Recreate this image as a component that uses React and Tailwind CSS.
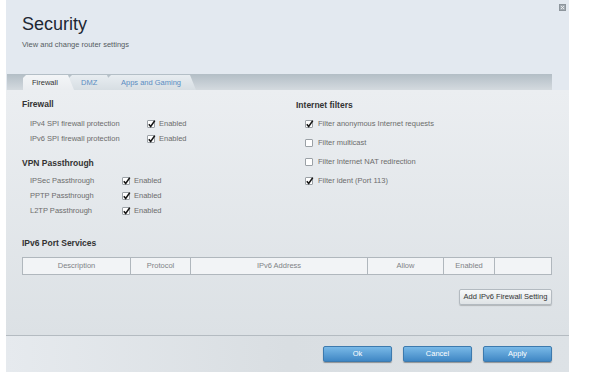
import React from "react";

const Check = ({ checked }) => (
  <span className="relative w-[8px] h-[8px] border border-[#9ba1a6] bg-white shrink-0 rounded-[1px]">
    {checked && (
      <svg width="9" height="9" viewBox="0 0 9 9" className="absolute left-[-1px] top-[-2px] overflow-visible">
        <path d="M1.8 5.2 L3.7 7.4 L7.8 1.6" fill="none" stroke="#151515" strokeWidth="1.6" />
      </svg>
    )}
  </span>
);

const Row = ({ label, w }) => (
  <div className="flex items-center h-[15px] pl-[8px]">
    <span className="text-[#6c6c6c]" style={{ width: w }}>{label}</span>
    <Check checked />
    <span className="ml-[4px] text-[#6c6c6c]">Enabled</span>
  </div>
);

const Filter = ({ label, checked }) => (
  <div className="flex items-center h-[19px] pl-[9px]">
    <Check checked={checked} />
    <span className="ml-[5px] text-[#6c6c6c]">{label}</span>
  </div>
);

const BlueBtn = ({ children }) => (
  <button className="w-[69px] h-[16px] rounded-[2px] border border-[#3d7aae] bg-linear-to-b from-[#79b9e7] to-[#3f87c4] text-white text-[7.5px] leading-none shadow-[0_1px_1px_rgba(0,0,0,0.35)]">
    {children}
  </button>
);

export default function App() {
  return (
    <div className="w-[608px] h-[383px] bg-white font-['Liberation_Sans',Arial,sans-serif] text-[7.5px] leading-none">
      <div className="ml-[6px] w-[563px] h-[372px] flex flex-col bg-[#e3e9f0]">
        {/* header */}
        <div className="h-[74px] flex justify-between">
          <div className="pl-[16px] pt-[14px]">
            <div className="text-[18px] leading-[20px] text-[#1d2733]">Security</div>
            <div className="mt-[6px] text-[7.5px] leading-[10px] text-[#555b61]">View and change router settings</div>
          </div>
          <div className="mt-[4px] mr-[3px]">
            <svg width="7" height="7" viewBox="0 0 7 7">
              <rect x="0" y="0" width="7" height="7" fill="#a3abb2" />
              <rect x="0.5" y="0.5" width="6" height="6" fill="none" stroke="#8d959c" strokeWidth="1" />
              <path d="M2 2 L5 5 M5 2 L2 5" stroke="#eef1f4" strokeWidth="0.9" />
            </svg>
          </div>
        </div>
        {/* tab bar */}
        <div className="h-[16px] ml-[1px] mr-[17px] bg-linear-to-b from-[#b3bec6] to-[#d4dadf] flex items-end pl-[16px]">
          <div className="relative z-10 w-[51px] h-[15px] pl-[9px] flex items-center bg-linear-to-b from-[#f3f5f7] to-[#eaedf0] text-[#333] [clip-path:polygon(0_100%,0_3px,3px_0,calc(100%_-_6px)_0,100%_100%)]">
            Firewall
          </div>
          <div className="relative z-[5] -ml-[5px] w-[44px] h-[15px] pl-[12px] flex items-center bg-linear-to-b from-[#e8edf1] to-[#d7dee3] text-[#5a8dc2] [clip-path:polygon(0_100%,0_3px,3px_0,calc(100%_-_6px)_0,100%_100%)]">
            DMZ
          </div>
          <div className="relative -ml-[5px] w-[88px] h-[15px] pl-[13px] flex items-center bg-linear-to-b from-[#e8edf1] to-[#d7dee3] text-[#5a8dc2] [clip-path:polygon(0_100%,0_3px,3px_0,calc(100%_-_6px)_0,100%_100%)]">
            Apps and Gaming
          </div>
        </div>
        {/* content */}
        <div className="h-[246px] pl-[16px] pr-[17px] pt-[8px] bg-linear-to-b from-[#ebeef1] to-[#dce1e5] border-b border-[#b4bbc1] flex flex-col">
          <div className="flex">
            <div className="w-[274px] flex flex-col">
              <div className="h-[12px] flex items-center text-[8.5px] font-bold text-[#333]">Firewall</div>
              <div className="mt-[6px]">
                <Row label="IPv4 SPI firewall protection" w={117} />
                <Row label="IPv6 SPI firewall protection" w={117} />
              </div>
              <div className="mt-[11px] h-[12px] flex items-center text-[8.5px] font-bold text-[#333]">VPN Passthrough</div>
              <div className="mt-[4px]">
                <Row label="IPSec Passthrough" w={92} />
                <Row label="PPTP Passthrough" w={92} />
                <Row label="L2TP Passthrough" w={92} />
              </div>
            </div>
            <div className="flex flex-col pt-[1px]">
              <div className="h-[12px] flex items-center text-[8.5px] font-bold text-[#333]">Internet filters</div>
              <div className="mt-[3px]">
                <Filter label="Filter anonymous Internet requests" checked />
                <Filter label="Filter multicast" />
                <Filter label="Filter Internet NAT redirection" />
                <Filter label="Filter ident (Port 113)" checked />
              </div>
            </div>
          </div>
          <div className="mt-[19px] h-[12px] flex items-center text-[8.5px] font-bold text-[#333]">IPv6 Port Services</div>
          <div className="mt-[8px] h-[18px] grid grid-cols-[108px_60px_177px_76px_51px_1fr] border border-[#b0b7bd] bg-[#f2f4f6] text-[#7f8386]">
            <div className="flex items-center justify-center border-r border-[#b0b7bd]">Description</div>
            <div className="flex items-center justify-center border-r border-[#b0b7bd]">Protocol</div>
            <div className="flex items-center justify-center border-r border-[#b0b7bd]">IPv6 Address</div>
            <div className="flex items-center justify-center border-r border-[#b0b7bd]">Allow</div>
            <div className="flex items-center justify-center border-r border-[#b0b7bd]">Enabled</div>
            <div></div>
          </div>
          <div className="mt-[14px] flex justify-end">
            <button className="w-[93px] h-[16px] rounded-[2px] border border-[#b3bac0] bg-linear-to-b from-[#f7f8f9] to-[#dfe3e6] text-[#333] text-[7.5px] leading-none shadow-[0_1px_1px_rgba(0,0,0,0.2)]">
              Add IPv6 Firewall Setting
            </button>
          </div>
        </div>
        {/* footer */}
        <div className="flex-1 flex items-center justify-end gap-[11px] pr-[17px] bg-linear-to-r from-[#e6eaee] via-[#d9dee2] to-[#dde2e6]">
          <BlueBtn>Ok</BlueBtn>
          <BlueBtn>Cancel</BlueBtn>
          <BlueBtn>Apply</BlueBtn>
        </div>
      </div>
    </div>
  );
}
